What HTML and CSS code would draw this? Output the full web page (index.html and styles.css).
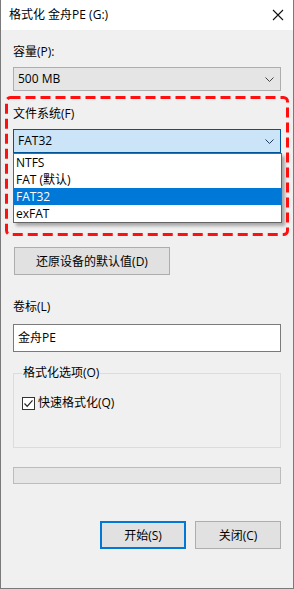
FILE: index.html
```html
<!DOCTYPE html>
<html>
<head>
  <meta charset="UTF-8">
  <title>格式化 金舟PE (G:)</title>
  <link rel="stylesheet" href="styles.css">
</head>
<body>

<div class="window">
  <!-- Title bar -->
  <div class="titlebar">
    <span class="title">格式化 金舟PE (G:)</span>
    <svg class="close" width="12" height="12" viewBox="0 0 12 12">
      <path d="M1 1 L11 11 M11 1 L1 11" stroke="#111" stroke-width="1.1" fill="none"/>
    </svg>
  </div>

  <div class="content">
    <div class="label label-first">容量(P):</div>
    <div class="combo">
      <span>500 MB</span>
      <svg class="chevron" width="9" height="5" viewBox="0 0 9 5"><path d="M0.5 0.5 L4.5 4.5 L8.5 0.5" stroke="#444" fill="none"/></svg>
    </div>

    <div class="fs">
      <div class="label">文件系统(F)</div>
      <div class="combo combo-open">
        <span>FAT32</span>
        <svg class="chevron" width="9" height="5" viewBox="0 0 9 5"><path d="M0.5 0.5 L4.5 4.5 L8.5 0.5" stroke="#1d3b5a" fill="none"/></svg>
      </div>
      <ul class="dropdown">
        <li>NTFS</li>
        <li>FAT (默认)</li>
        <li class="selected">FAT32</li>
        <li>exFAT</li>
      </ul>
      <svg class="highlight" width="285" height="141" viewBox="0 0 285 141">
        <rect x="1.5" y="1.5" width="281" height="137" rx="4" ry="4" fill="none" stroke="#ff1010" stroke-width="3" stroke-dasharray="10 5"/>
      </svg>
    </div>

    <button class="btn btn-restore">还原设备的默认值(D)</button>

    <div class="label label-volume">卷标(L)</div>
    <div class="textbox">金舟PE</div>

    <fieldset class="group">
      <legend>格式化选项(O)</legend>
      <div class="check">
        <span class="box">
          <svg width="11" height="11" viewBox="0 0 11 11"><path d="M1.5 5.5 L4.2 8.3 L9.5 2.3" stroke="#222" stroke-width="1.2" fill="none"/></svg>
        </span>
        <span>快速格式化(Q)</span>
      </div>
    </fieldset>

    <div class="progress"></div>

    <div class="actions">
      <button class="btn btn-primary">开始(S)</button>
      <button class="btn">关闭(C)</button>
    </div>
  </div>
</div>

</body>
</html>
```

FILE: styles.css
```css
* {
  box-sizing: border-box;
}

body {
  margin: 0;
  font-family: "Open Sans", "Noto Sans CJK SC", sans-serif;
  font-size: 12px;
  color: #000;
}

.window {
  width: 294px;
  height: 589px;
  background-color: #f0f0f0;
  border: 1px solid #7a7a7a;
  border-top: none;
}

/* Title bar */
.titlebar {
  height: 30px;
  background-color: #fff;
  display: flex;
  align-items: center;
  justify-content: space-between;
  padding: 0 9px 0 8px;
}

.title {
  font-size: 12px;
  line-height: 16px;
}

.close {
  display: block;
}

.content {
  padding: 0 12px;
}

.label {
  line-height: 16px;
  height: 16px;
}

.label-first {
  margin-top: 14px;
}

.label-volume {
  margin-top: 24px;
  margin-bottom: 9px;
}

/* Combo boxes */
.combo {
  height: 24px;
  margin-top: 7px;
  background-color: #e5e5e5;
  border: 1px solid #adadad;
  display: flex;
  align-items: center;
  justify-content: space-between;
  padding: 0 6px 0 4px;
  line-height: 16px;
}

.combo-open {
  background-color: #cce4f7;
  border-color: #005499;
}

.chevron {
  display: block;
}

.fs {
  position: relative;
  margin-top: 15px;
}

.dropdown {
  position: absolute;
  left: 0;
  top: 47px;
  width: 269px;
  margin: 0;
  padding: 0;
  list-style: none;
  background-color: #fff;
  border: 1px solid #646464;
  box-shadow: 3px 3px 3px rgba(0, 0, 0, 0.3);
  z-index: 2;
}

.dropdown li {
  height: 17px;
  line-height: 17px;
  padding-left: 2px;
}

.dropdown li.selected {
  background-color: #0078d7;
  color: #fff;
}

.highlight {
  position: absolute;
  left: -8px;
  top: -10px;
  z-index: 3;
}

/* Buttons */
.btn {
  font-family: inherit;
  font-size: 12px;
  color: #000;
  background-color: #e1e1e1;
  border: 1px solid #adadad;
  height: 28px;
  padding: 0;
}

.btn-restore {
  display: block;
  width: 156px;
  margin: 94px 0 0 1px;
}

.textbox {
  height: 28px;
  background-color: #fff;
  border: 1px solid #7a7a7a;
  padding: 0 4px;
  line-height: 26px;
}

/* Group box */
.group {
  margin: 13px 0 0;
  padding: 14px 8px 0;
  height: 83px;
  border: 1px solid #dcdcdc;
}

.group legend {
  padding: 0 1px;
  margin-left: 0;
  line-height: 16px;
}

.check {
  display: flex;
  align-items: center;
  gap: 3px;
  line-height: 16px;
}

.box {
  width: 13px;
  height: 13px;
  border: 1px solid #333;
  background-color: #fff;
  display: flex;
  align-items: center;
  justify-content: center;
}

.box svg {
  display: block;
}

.progress {
  height: 17px;
  margin-top: 19px;
  background-color: #e6e6e6;
  border: 1px solid #bcbcbc;
}

.actions {
  display: flex;
  justify-content: flex-end;
  gap: 9px;
  margin-top: 37px;
}

.actions .btn {
  width: 86px;
}

.btn-primary {
  border: 2px solid #0078d7;
}
```
